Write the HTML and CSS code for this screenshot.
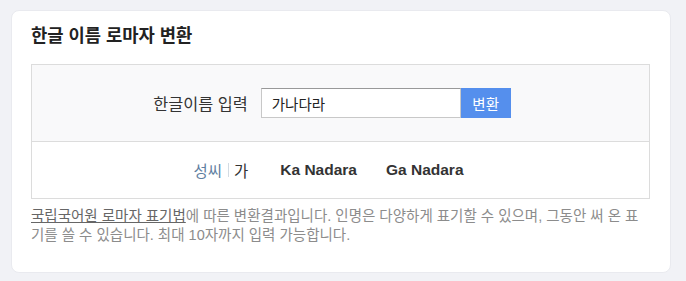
FILE: index.html
```html
<!DOCTYPE html>
<html lang="ko">
<head>
    <meta charset="UTF-8">
    <meta name="viewport" content="width=device-width, initial-scale=1.0">
    <title>한글 이름 로마자 변환</title>
    <link rel="stylesheet" href="styles.css">
</head>
<body>
    <div class="card">
        <h2 class="card-title">한글 이름 로마자 변환</h2>

        <div class="converter">
            <!-- 입력 영역 -->
            <form class="input-row" onsubmit="return false;">
                <label for="nameInput" class="input-label">한글이름 입력</label>
                <input type="text" id="nameInput" class="name-input" value="가나다라" maxlength="10">
                <button type="submit" class="convert-btn">변환</button>
            </form>

            <!-- 결과 영역 -->
            <div class="result-row">
                <span class="result-key">성씨</span>
                <span class="result-sep"></span>
                <span class="result-surname">가</span>
                <span class="result-name first">Ka Nadara</span>
                <span class="result-name">Ga Nadara</span>
            </div>
        </div>

        <p class="note"><a href="#" class="note-link">국립국어원 로마자 표기법</a>에 따른 변환결과입니다. 인명은 다양하게 표기할 수 있으며, 그동안 써 온 표기를 쓸 수 있습니다. 최대 10자까지 입력 가능합니다.</p>
    </div>
</body>
</html>
```

FILE: styles.css
```css
body {
    margin: 0;
    padding: 10px 0 0 11px;
    background: #f1f2f6;
    font-family: 'Liberation Sans', 'Noto Sans CJK KR', sans-serif;
    color: #333;
}

.card {
    width: 660px;
    box-sizing: border-box;
    background: #fff;
    border: 1px solid #e9eaef;
    border-radius: 8px;
    padding: 14px 20px 27px 19px;
}

.card-title {
    margin: 0 0 17px 0;
    font-size: 17.7px;
    line-height: 22px;
    font-weight: 700;
    color: #222;
}

.converter {
    border: 1px solid #dcdcdc;
}

.input-row {
    display: flex;
    align-items: center;
    justify-content: center;
    height: 76px;
    margin: 0;
    padding-right: 17px;
    background: #f9f9fa;
    border-bottom: 1px solid #dcdcdc;
}

.input-label {
    font-size: 16.3px;
    color: #333;
    margin-right: 13px;
}

.name-input {
    width: 200px;
    height: 30px;
    box-sizing: border-box;
    padding: 0 10px;
    border: 1px solid #c8c8c8;
    border-top-color: #999;
    border-radius: 0;
    font-family: inherit;
    font-size: 14.5px;
    color: #222;
    outline: none;
}

.convert-btn {
    width: 50px;
    height: 30px;
    border: none;
    background: #558fed;
    color: #fff;
    font-family: inherit;
    font-size: 14.5px;
    cursor: pointer;
}

.result-row {
    display: flex;
    align-items: center;
    justify-content: center;
    height: 56px;
    padding-right: 24px;
}

.result-key {
    font-size: 15.5px;
    color: #5f7fa1;
}

.result-sep {
    width: 1px;
    height: 14px;
    background: #d3dbe3;
    margin: 0 5px 0 6px;
}

.result-surname {
    font-size: 15.5px;
    color: #333;
}

.result-name {
    font-size: 15.5px;
    font-weight: 700;
    color: #333;
    margin-left: 29px;
}

.result-name.first {
    margin-left: 32px;
}

.note {
    margin: 8px 0 0 0;
    font-size: 14.5px;
    line-height: 19px;
    color: #8c8c8c;
}

.note-link {
    color: #666;
    text-decoration: underline;
}
```
